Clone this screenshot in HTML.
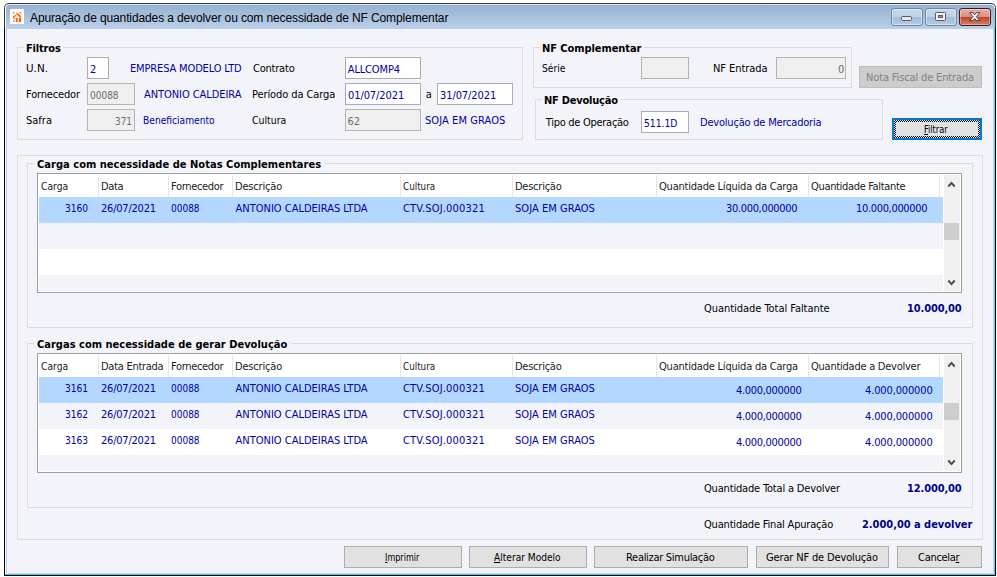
<!DOCTYPE html>
<html><head><meta charset="utf-8"><title>Apuração</title>
<style>
*{box-sizing:border-box;margin:0;padding:0}
html,body{width:997px;height:577px;background:#fff;overflow:hidden}
body{position:relative;font-family:"DejaVu Sans Condensed","Liberation Sans",sans-serif;font-size:11px;color:#000}
div,span,svg{position:absolute}
.t{transform-origin:0 0;white-space:nowrap;line-height:14px;height:14px;font-size:11px}
.ttl{font-family:"Liberation Sans",sans-serif;font-size:12px;line-height:14px}
.b{font-weight:bold}
.n{color:#0000a4}
.b.n{color:#000088}
.g{color:#6d6d6d}
.h{color:#1a1a1a}
.dis{color:#838383}
u{text-decoration:underline;text-underline-offset:1px}
#frame{left:4px;top:3px;width:992px;height:573px;background:linear-gradient(#3c3c3c 0,#333 24px,#000 27px,#000 100%);border-radius:5px 5px 0 0}
#frame2{left:5px;top:4px;width:990px;height:571px;background:#fff;border-radius:4px 4px 0 0}
#tl{left:8px;top:4px;width:984px;height:1px;background:#d9e4f1}
#tb{left:6px;top:5px;width:988px;height:24px;background:linear-gradient(#97b2d1 0%,#a6bfdc 45%,#b9d0ea 100%);border-radius:3px 3px 0 0}
#lb{left:6px;top:29px;width:1px;height:545px;background:#b9ceea}
#rb{left:994px;top:8px;width:1px;height:567px;background:linear-gradient(#8fdcf5 0,#4fd0fb 22px,#4fd0fb 100%)}
#rb2{left:993px;top:29px;width:1px;height:545px;background:#cbd5f0}
#bb2{left:6px;top:573px;width:988px;height:1px;background:#cfd6ef}
#bb{left:5px;top:574px;width:990px;height:1px;background:#3fd0f0}
#client{left:7px;top:29px;width:986px;height:544px;background:#f3f4fa}
.gb{border:1px solid #dcdcdc}
.inw{background:#fff;border:1px solid #abadb3}
.ing{background:#efefef;border:1px solid #b4b4b4}
.btn{background:#e1e1e1;border:1px solid #adadad}
.btnd{background:#cccccc;border:1px solid #bfbfbf}
.btnf{background:#e1e1e1;border:2px solid #0078d7}
.foc{background:repeating-conic-gradient(#111 0% 25%,#e1e1e1 0% 50%) 0 0/2px 2px}
.foci{background:#e1e1e1}
.grid{background:#fff;border:1px solid #9c9ea4}
.sep{background:#e5e5e5}
.sel{background:#b3d7ff}
.alt{background:#f3f4fa}
.sb{background:#f0f0f0}
.thumb{background:#cdcdcd}
.lblbg{background:#f3f4fa}
.wb{border:1px solid #6f86a6;border-radius:3px;background:linear-gradient(#c6d8ec 0%,#bdd1e8 48%,#a4bcd9 50%,#b4cae3 100%);box-shadow:inset 0 0 0 1px rgba(255,255,255,.45)}
.wc{border:1px solid #431822;border-radius:3px;background:linear-gradient(#e5b1a4 0%,#d98f7f 48%,#c2412a 50%,#d57f68 100%);box-shadow:inset 0 0 0 1px rgba(255,255,255,.35)}
</style></head>
<body>
<div id="frame"></div><div id="frame2"></div><div id="tl"></div><div id="tb"></div><div id="lb"></div><div id="rb"></div><div id="rb2"></div><div id="bb2"></div><div id="bb"></div><div id="client"></div>
<div style="left:9.7px;top:9.4px;width:14.6px;height:14.8px;background:#fff"></div>
<svg class="abs" style="left:8px;top:7px" width="20" height="20" viewBox="0 0 20 20"><g fill="#ff6a17"><path d="M4.9 5 L7 5 L4.9 7.4 Z" fill="#ff8a3c"/><path d="M10.8 5 L13.1 5 L13.1 7.4 Z" fill="#ff8a3c"/><path d="M7.9 6.9 L9 5.6 L13.1 9.1 L13.1 10.6 L11.9 10.4 Z"/><path d="M4.9 9.5 L7.2 7.7 L8.2 8.8 L4.9 12.1 Z"/><path d="M6.4 10.6 L7.4 11.2 L6.2 12.6 L5.4 12.2 Z" fill="#ff8a3c"/><rect x="5" y="12.9" width="1.4" height="2.1" fill="#ff8a3c"/><rect x="7.8" y="10.8" width="1.8" height="4.2" fill="#ff5a0a"/><rect x="10.8" y="10.8" width="2.3" height="4.2" fill="#ff5a0a"/></g></svg>
<div class="wb" style="left:891px;top:8px;width:32px;height:18px;"></div>
<div class="wb" style="left:925px;top:8px;width:32px;height:18px;"></div>
<div class="wc" style="left:959px;top:8px;width:32px;height:18px;"></div>
<svg class="abs" style="left:900px;top:15px" width="14" height="8" viewBox="0 0 14 8"><rect x="1.5" y="1.5" width="10" height="4" rx="1" fill="#e8e8e8" stroke="#5a5a5a"/></svg>
<svg class="abs" style="left:934px;top:11px" width="14" height="12" viewBox="0 0 14 12"><rect x="1.5" y="1.5" width="10" height="8" rx="1" fill="#f4f4f4" stroke="#55596a"/><rect x="4.5" y="4.5" width="4" height="2" fill="#8aa5c8" stroke="#55596a"/></svg>
<svg class="abs" style="left:968px;top:11px" width="14" height="12" viewBox="0 0 14 12"><path d="M1.6 1.7 L4.9 1.7 L6.7 3.8 L8.5 1.7 L11.8 1.7 L8.4 5.7 L11.8 9.6 L8.5 9.6 L6.7 7.6 L4.9 9.6 L1.6 9.6 L5 5.7 Z" fill="#fafafa" stroke="#473f4d" stroke-width="1"/></svg>
<div class="gb" style="left:17px;top:47px;width:506px;height:93px;"></div>
<div class="gb" style="left:533px;top:47px;width:319px;height:41px;"></div>
<div class="gb" style="left:535px;top:99px;width:348px;height:41px;"></div>
<div class="gb" style="left:17px;top:155px;width:966px;height:385px;"></div>
<div class="gb" style="left:27px;top:163px;width:946px;height:165px;"></div>
<div class="gb" style="left:27px;top:343px;width:946px;height:165px;"></div>
<div class="lblbg" style="left:24px;top:42px;width:39px;height:13px;"></div>
<div class="lblbg" style="left:540px;top:42px;width:104px;height:13px;"></div>
<div class="lblbg" style="left:542px;top:94px;width:79px;height:13px;"></div>
<div class="lblbg" style="left:34px;top:158px;width:290px;height:13px;"></div>
<div class="lblbg" style="left:34px;top:338px;width:257px;height:13px;"></div>
<div class="inw" style="left:87px;top:57px;width:22px;height:22px;"></div>
<div class="ing" style="left:87px;top:83px;width:48px;height:22px;"></div>
<div class="ing" style="left:87px;top:109px;width:48px;height:22px;"></div>
<div class="inw" style="left:345px;top:57px;width:76px;height:22px;"></div>
<div class="inw" style="left:345px;top:83px;width:76px;height:22px;"></div>
<div class="inw" style="left:437px;top:83px;width:76px;height:22px;"></div>
<div class="ing" style="left:345px;top:109px;width:76px;height:22px;"></div>
<div class="ing" style="left:641px;top:57px;width:48px;height:22px;"></div>
<div class="ing" style="left:776px;top:57px;width:70px;height:22px;"></div>
<div class="inw" style="left:641px;top:111px;width:48px;height:22px;"></div>
<div class="btnd" style="left:859px;top:66px;width:123px;height:22px;"></div>
<div class="btnf" style="left:892px;top:118px;width:90px;height:22px;"></div>
<div class="foc" style="left:894px;top:120px;width:86px;height:18px;"></div>
<div class="foci" style="left:896px;top:122px;width:82px;height:14px;"></div>
<div class="btn" style="left:344px;top:546px;width:118px;height:22px;"></div>
<div class="btn" style="left:469px;top:546px;width:118px;height:22px;"></div>
<div class="btn" style="left:594px;top:546px;width:154px;height:22px;"></div>
<div class="btn" style="left:756px;top:546px;width:133px;height:22px;"></div>
<div class="btn" style="left:897px;top:546px;width:85px;height:22px;"></div>
<div class="grid" style="left:37px;top:173px;width:925px;height:120px;"></div>
<div class="sep" style="left:98px;top:175px;width:1px;height:22px;"></div>
<div class="sep" style="left:168px;top:175px;width:1px;height:22px;"></div>
<div class="sep" style="left:232px;top:175px;width:1px;height:22px;"></div>
<div class="sep" style="left:400px;top:175px;width:1px;height:22px;"></div>
<div class="sep" style="left:512px;top:175px;width:1px;height:22px;"></div>
<div class="sep" style="left:656px;top:175px;width:1px;height:22px;"></div>
<div class="sep" style="left:808px;top:175px;width:1px;height:22px;"></div>
<div class="sep" style="left:939px;top:175px;width:1px;height:22px;"></div>
<div class="sel" style="left:39px;top:197px;width:904px;height:26px;"></div>
<div class="alt" style="left:39px;top:223px;width:904px;height:26px;"></div>
<div class="alt" style="left:39px;top:275px;width:904px;height:16px;"></div>
<div class="sb" style="left:944px;top:175px;width:16px;height:116px;"></div>
<div class="thumb" style="left:944px;top:223px;width:15px;height:17px;"></div>
<svg class="abs" style="left:947px;top:180px" width="10" height="8" viewBox="0 0 10 8"><path d="M1.3 6.5 L4.5 2.9 L7.7 6.5" fill="none" stroke="#4d4d4d" stroke-width="2"/></svg>
<svg class="abs" style="left:947px;top:279px" width="10" height="8" viewBox="0 0 10 8"><path d="M1.3 1.5 L4.5 5.1 L7.7 1.5" fill="none" stroke="#4d4d4d" stroke-width="2"/></svg>
<div class="grid" style="left:37px;top:353px;width:925px;height:120px;"></div>
<div class="sep" style="left:98px;top:355px;width:1px;height:22px;"></div>
<div class="sep" style="left:168px;top:355px;width:1px;height:22px;"></div>
<div class="sep" style="left:232px;top:355px;width:1px;height:22px;"></div>
<div class="sep" style="left:400px;top:355px;width:1px;height:22px;"></div>
<div class="sep" style="left:512px;top:355px;width:1px;height:22px;"></div>
<div class="sep" style="left:656px;top:355px;width:1px;height:22px;"></div>
<div class="sep" style="left:808px;top:355px;width:1px;height:22px;"></div>
<div class="sep" style="left:939px;top:355px;width:1px;height:22px;"></div>
<div class="sel" style="left:39px;top:377px;width:904px;height:26px;"></div>
<div class="alt" style="left:39px;top:403px;width:904px;height:26px;"></div>
<div class="alt" style="left:39px;top:455px;width:904px;height:16px;"></div>
<div class="sb" style="left:944px;top:355px;width:16px;height:116px;"></div>
<div class="thumb" style="left:944px;top:403px;width:15px;height:17px;"></div>
<svg class="abs" style="left:947px;top:360px" width="10" height="8" viewBox="0 0 10 8"><path d="M1.3 6.5 L4.5 2.9 L7.7 6.5" fill="none" stroke="#4d4d4d" stroke-width="2"/></svg>
<svg class="abs" style="left:947px;top:459px" width="10" height="8" viewBox="0 0 10 8"><path d="M1.3 1.5 L4.5 5.1 L7.7 1.5" fill="none" stroke="#4d4d4d" stroke-width="2"/></svg>
<span id="t0" class="t ttl" style="left:30px;top:11px;letter-spacing:-0.12px;">Apuração de quantidades a devolver ou com necessidade de NF Complementar</span>
<span id="t1" class="t b" style="left:26px;top:42px;letter-spacing:-0.167px;">Filtros</span>
<span id="t2" class="t " style="left:26px;top:62px;transform:scaleX(1.049);">U.N.</span>
<span id="t3" class="t " style="left:26px;top:88px;letter-spacing:-0.167px;">Fornecedor</span>
<span id="t4" class="t " style="left:26px;top:114px;">Safra</span>
<span id="t5" class="t n" style="left:90px;top:63px;">2</span>
<span id="t6" class="t g" style="left:90px;top:89px;transform:scaleX(0.9084);">00088</span>
<span id="t7" class="t g" style="left:115px;top:115px;transform:scaleX(0.8997);">371</span>
<span id="t8" class="t n" style="left:130px;top:62px;letter-spacing:-0.147px;">EMPRESA MODELO LTD</span>
<span id="t9" class="t n" style="left:144px;top:88px;letter-spacing:-0.067px;">ANTONIO CALDEIRA</span>
<span id="t10" class="t n" style="left:143px;top:114px;transform:scaleX(0.9231);">Beneficiamento</span>
<span id="t11" class="t " style="left:253px;top:62px;letter-spacing:-0.214px;">Contrato</span>
<span id="t12" class="t " style="left:252px;top:88px;letter-spacing:-0.1px;">Período da Carga</span>
<span id="t13" class="t " style="left:252px;top:114px;transform:scaleX(0.9456);">Cultura</span>
<span id="t14" class="t n" style="left:347.8px;top:63px;letter-spacing:-0.157px;">ALLCOMP4</span>
<span id="t15" class="t n" style="left:348px;top:89px;letter-spacing:-0.089px;">01/07/2021</span>
<span id="t16" class="t " style="left:425.8px;top:88px;">a</span>
<span id="t17" class="t n" style="left:440px;top:89px;letter-spacing:-0.089px;">31/07/2021</span>
<span id="t18" class="t g" style="left:347.4px;top:115px;">62</span>
<span id="t19" class="t n" style="left:425px;top:114px;letter-spacing:0.083px;">SOJA EM GRAOS</span>
<span id="t20" class="t b" style="left:542px;top:42px;letter-spacing:-0.071px;">NF Complementar</span>
<span id="t21" class="t " style="left:542px;top:62px;transform:scaleX(0.9231);">Série</span>
<span id="t22" class="t " style="left:713px;top:62px;letter-spacing:-0.056px;">NF Entrada</span>
<span id="t23" class="t g" style="left:838px;top:63px;">0</span>
<span id="t24" class="t dis" style="left:866px;top:71px;letter-spacing:-0.143px;">Nota Fiscal de Entrada</span>
<span id="t25" class="t b" style="left:544px;top:94px;letter-spacing:-0.227px;">NF Devolução</span>
<span id="t26" class="t " style="left:545.8px;top:116px;letter-spacing:-0.28px;">Tipo de Operação</span>
<span id="t27" class="t n" style="left:644px;top:117px;transform:scaleX(0.93);">511.1D</span>
<span id="t28" class="t n" style="left:700px;top:116px;letter-spacing:-0.205px;">Devolução de Mercadoria</span>
<span id="t29" class="t " style="left:924px;top:123px;transform:scaleX(0.8276);"><u>F</u>iltrar</span>
<span id="t30" class="t b" style="left:37px;top:158px;letter-spacing:0.034px;">Carga com necessidade de Notas Complementares</span>
<span id="t31" class="t h" style="left:41px;top:180px;transform:scaleX(0.931);">Carga</span>
<span id="t32" class="t h" style="left:101px;top:180px;letter-spacing:-0.333px;">Data</span>
<span id="t33" class="t h" style="left:171px;top:180px;letter-spacing:-0.333px;">Fornecedor</span>
<span id="t34" class="t h" style="left:235px;top:180px;letter-spacing:-0.188px;">Descrição</span>
<span id="t35" class="t h" style="left:403px;top:180px;transform:scaleX(0.8889);">Cultura</span>
<span id="t36" class="t h" style="left:515px;top:180px;letter-spacing:-0.25px;">Descrição</span>
<span id="t37" class="t h" style="left:659px;top:180px;letter-spacing:-0.212px;">Quantidade Líquida da Carga</span>
<span id="t38" class="t h" style="left:811px;top:180px;letter-spacing:-0.333px;">Quantidade Faltante</span>
<span id="t39" class="t n" style="left:65px;top:202px;transform:scaleX(0.92);">3160</span>
<span id="t40" class="t n" style="left:101px;top:202px;letter-spacing:-0.222px;">26/07/2021</span>
<span id="t41" class="t n" style="left:171px;top:202px;transform:scaleX(0.9084);">00088</span>
<span id="t42" class="t n" style="left:235.5px;top:202px;">ANTONIO CALDEIRAS LTDA</span>
<span id="t43" class="t n" style="left:403px;top:202px;letter-spacing:0.192px;">CTV.SOJ.000321</span>
<span id="t44" class="t n" style="left:515px;top:202px;letter-spacing:0.042px;">SOJA EM GRAOS</span>
<span id="t45" class="t n" style="left:726px;top:202px;letter-spacing:-0.333px;">30.000,000000</span>
<span id="t46" class="t n" style="left:856px;top:202px;letter-spacing:-0.333px;">10.000,000000</span>
<span id="t47" class="t " style="left:704px;top:302px;letter-spacing:-0.042px;">Quantidade Total Faltante</span>
<span id="t48" class="t b n" style="left:907px;top:302px;letter-spacing:-0.125px;">10.000,00</span>
<span id="t49" class="t b" style="left:37px;top:338px;letter-spacing:0.013px;">Cargas com necessidade de gerar Devolução</span>
<span id="t50" class="t h" style="left:41px;top:360px;transform:scaleX(0.931);">Carga</span>
<span id="t51" class="t h" style="left:101px;top:360px;letter-spacing:-0.273px;">Data Entrada</span>
<span id="t52" class="t h" style="left:171px;top:360px;letter-spacing:-0.333px;">Fornecedor</span>
<span id="t53" class="t h" style="left:235px;top:360px;letter-spacing:-0.188px;">Descrição</span>
<span id="t54" class="t h" style="left:403px;top:360px;transform:scaleX(0.8889);">Cultura</span>
<span id="t55" class="t h" style="left:515px;top:360px;letter-spacing:-0.25px;">Descrição</span>
<span id="t56" class="t h" style="left:659px;top:360px;letter-spacing:-0.212px;">Quantidade Líquida da Carga</span>
<span id="t57" class="t h" style="left:811px;top:360px;letter-spacing:-0.25px;">Quantidade a Devolver</span>
<span id="t58" class="t n" style="left:65px;top:382px;transform:scaleX(0.92);">3161</span>
<span id="t59" class="t n" style="left:101px;top:382px;letter-spacing:-0.222px;">26/07/2021</span>
<span id="t60" class="t n" style="left:171px;top:382px;transform:scaleX(0.9084);">00088</span>
<span id="t61" class="t n" style="left:235.5px;top:382px;">ANTONIO CALDEIRAS LTDA</span>
<span id="t62" class="t n" style="left:403px;top:382px;letter-spacing:0.192px;">CTV.SOJ.000321</span>
<span id="t63" class="t n" style="left:515px;top:382px;letter-spacing:0.042px;">SOJA EM GRAOS</span>
<span id="t64" class="t n" style="left:736px;top:384px;letter-spacing:-0.318px;">4.000,000000</span>
<span id="t65" class="t n" style="left:865px;top:384px;letter-spacing:-0.136px;">4.000,000000</span>
<span id="t66" class="t n" style="left:65px;top:408px;transform:scaleX(0.92);">3162</span>
<span id="t67" class="t n" style="left:101px;top:408px;letter-spacing:-0.222px;">26/07/2021</span>
<span id="t68" class="t n" style="left:171px;top:408px;transform:scaleX(0.9084);">00088</span>
<span id="t69" class="t n" style="left:235.5px;top:408px;">ANTONIO CALDEIRAS LTDA</span>
<span id="t70" class="t n" style="left:403px;top:408px;letter-spacing:0.192px;">CTV.SOJ.000321</span>
<span id="t71" class="t n" style="left:515px;top:408px;letter-spacing:0.042px;">SOJA EM GRAOS</span>
<span id="t72" class="t n" style="left:736px;top:410px;letter-spacing:-0.318px;">4.000,000000</span>
<span id="t73" class="t n" style="left:865px;top:410px;letter-spacing:-0.136px;">4.000,000000</span>
<span id="t74" class="t n" style="left:65px;top:434px;transform:scaleX(0.92);">3163</span>
<span id="t75" class="t n" style="left:101px;top:434px;letter-spacing:-0.222px;">26/07/2021</span>
<span id="t76" class="t n" style="left:171px;top:434px;transform:scaleX(0.9084);">00088</span>
<span id="t77" class="t n" style="left:235.5px;top:434px;">ANTONIO CALDEIRAS LTDA</span>
<span id="t78" class="t n" style="left:403px;top:434px;letter-spacing:0.192px;">CTV.SOJ.000321</span>
<span id="t79" class="t n" style="left:515px;top:434px;letter-spacing:0.042px;">SOJA EM GRAOS</span>
<span id="t80" class="t n" style="left:736px;top:436px;letter-spacing:-0.318px;">4.000,000000</span>
<span id="t81" class="t n" style="left:865px;top:436px;letter-spacing:-0.136px;">4.000,000000</span>
<span id="t82" class="t " style="left:704px;top:482px;letter-spacing:-0.173px;">Quantidade Total a Devolver</span>
<span id="t83" class="t b n" style="left:907px;top:482px;letter-spacing:-0.125px;">12.000,00</span>
<span id="t84" class="t " style="left:704px;top:518px;letter-spacing:-0.188px;">Quantidade Final Apuração</span>
<span id="t85" class="t b n" style="left:862px;top:518px;letter-spacing:-0.028px;">2.000,00 a devolver</span>
<span id="t86" class="t " style="left:385px;top:551px;transform:scaleX(0.814);"><u>I</u>mprimir</span>
<span id="t87" class="t " style="left:494px;top:551px;transform:scaleX(0.9178);"><u>A</u>lterar Modelo</span>
<span id="t88" class="t " style="left:626px;top:551px;letter-spacing:-0.294px;">Realizar Simulação</span>
<span id="t89" class="t " style="left:766px;top:551px;letter-spacing:-0.15px;">Gerar NF de Devolução</span>
<span id="t90" class="t " style="left:918px;top:551px;letter-spacing:-0.286px;">Cancela<u>r</u></span>
</body></html>
